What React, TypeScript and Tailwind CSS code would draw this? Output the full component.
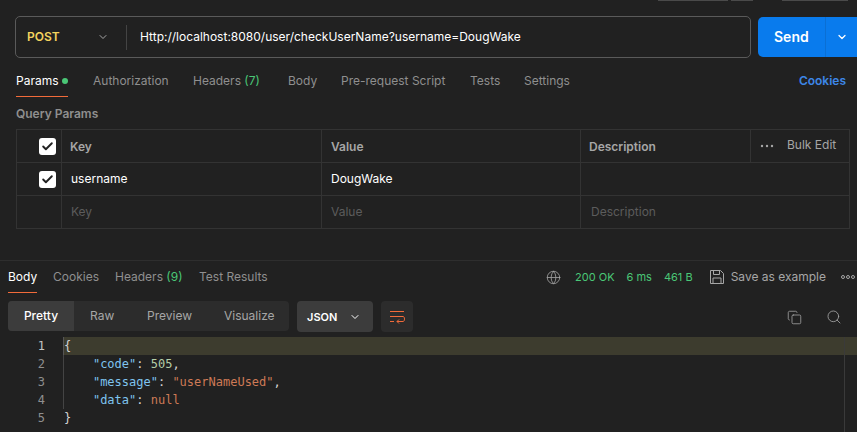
import { Copy, Search, ChevronDown, Globe, Check } from 'lucide-react';

const requestTabs = [
    { label: 'Authorization', width: 'w-[100px]' },
    { label: 'Headers', count: '(7)', width: 'w-[95px]' },
    { label: 'Body', width: 'w-[53px]' },
    { label: 'Pre-request Script', width: 'w-[129px]' },
    { label: 'Tests', width: 'w-[54px]' },
    { label: 'Settings', width: 'w-[70px]' },
];

function Checkbox() {
    return (
        <span className="flex h-[17px] w-[17px] items-center justify-center rounded-[3px] bg-white">
            <Check size={13} strokeWidth={3.5} className="text-[#212121]" />
        </span>
    );
}

function Dots({ hollow }: { hollow?: boolean }) {
    const r = hollow ? 1.5 : 1.2;
    return (
        <svg width="14" height="6" viewBox="0 0 14 6" fill={hollow ? 'none' : '#a6a6a6'} stroke={hollow ? '#a6a6a6' : 'none'}>
            <circle cx="2" cy="3" r={r} />
            <circle cx="7" cy="3" r={r} />
            <circle cx="12" cy="3" r={r} />
        </svg>
    );
}

function SaveIcon() {
    return (
        <svg width="14" height="14" viewBox="0 0 14 14" fill="none" stroke="#a6a6a6" strokeWidth="1" className="ml-[17px]">
            <path d="M.5.5h10l3 3v10H.5zM3.5.5v4h6v-4M3 13.5V8h8v5.5" />
        </svg>
    );
}

function Row({ first, second, third, box, tone, last }: { first: string; second: string; third: string; box?: boolean; tone: string; last?: boolean }) {
    return (
        <div className={`flex items-center border-[#333333] ${tone} ${last ? 'h-[32px]' : 'h-[33px] border-b'}`}>
            <div className="flex h-full w-[45px] items-center justify-end border-r border-[#333333] pr-[5px]">{box && <Checkbox />}</div>
            <div className="flex h-full w-[260px] items-center border-r border-[#333333] pl-[9px]">{first}</div>
            <div className="flex h-full w-[259px] items-center border-r border-[#333333] pl-[9px]">{second}</div>
            <div className="flex h-full flex-1 items-center pl-[10px]">{third}</div>
        </div>
    );
}

export default function App() {
    return (
        <div className="flex h-[432px] w-[857px] flex-col overflow-hidden bg-[#212121] font-['Inter',sans-serif] text-[12px] leading-[18px] text-[#a6a6a6]">
            {/* Cut off toolbar buttons from the window above */}
            <div className="flex h-[16px] items-start pl-[658px]">
                <span className="h-px w-[70px] bg-[#4a4a4a]" />
                <span className="ml-[3px] h-px w-[22px] bg-[#4a4a4a]" />
                <span className="ml-[29px] h-px w-[66px] bg-[#4a4a4a]" />
            </div>

            <div className="flex h-[42px] pl-[15px]">
                <div className="flex h-full w-[736px] items-center rounded-[5px] border border-[#5a5a5a]">
                    <div className="flex h-[25px] w-[111px] items-center justify-between border-r border-[#444444] pr-[17px] pl-[11px]">
                        <span className="font-semibold text-[#f4d35e]">POST</span>
                        <ChevronDown size={12} className="text-[#a6a6a6]" />
                    </div>
                    <span className="pl-[13px] text-white">Http://localhost:8080/user/checkUserName?username=DougWake</span>
                </div>
                <div className="mt-px ml-[7px] flex h-[40px] flex-1 items-center rounded-l-[5px] bg-[#097bed] text-white">
                    <span className="w-[67px] pl-[16px] text-[14px] font-semibold">Send</span>
                    <span className="flex h-full flex-1 items-center justify-center border-l border-[#0a6fd4]">
                        <ChevronDown size={12} strokeWidth={2.5} />
                    </span>
                </div>
            </div>

            <div className="flex h-[47px] items-start pl-[16px] pt-[14px]">
                <div className="w-[77px]">
                    <div className="flex w-[52px] items-center justify-between border-b border-[#f26b3a] pb-[6px] text-white">
                        Params <span className="h-[6px] w-[6px] rounded-full bg-[#4ac776]" />
                    </div>
                </div>
                {requestTabs.map((tab) => (
                    <span key={tab.label} className={`${tab.width} text-[#8f8f8f]`}>
                        {tab.label} {tab.count && <span className="text-[#4ac776]">{tab.count}</span>}
                    </span>
                ))}
                <span className="ml-auto pr-[11px] font-semibold text-[#3d87e8]">Cookies</span>
            </div>

            <div className="h-[24px] pl-[16px] font-semibold text-[#8f8f8f]">Query Params</div>

            <div className="ml-[16px] h-[100px] w-[834px] border border-[#333333]">
                <div className="flex h-[33px] items-center border-b border-[#333333] font-semibold text-[#a6a6a6]">
                    <div className="flex h-full w-[45px] items-center justify-end border-r border-[#333333] pr-[5px]"><Checkbox /></div>
                    <div className="flex h-full w-[260px] items-center border-r border-[#333333] pt-px pl-[8px]">Key</div>
                    <div className="flex h-full w-[259px] items-center border-r border-[#333333] pt-px pl-[9px]">Value</div>
                    <div className="flex h-full w-[170px] items-center border-r border-[#333333] pt-px pl-[8px]">Description</div>
                    <div className="flex h-full flex-1 items-center pl-[9px] font-normal">
                        <Dots />
                        <span className="ml-[13px] pb-[2px]">Bulk Edit</span>
                    </div>
                </div>
                <Row first="username" second="DougWake" third="" box tone="text-white" />
                <Row first="Key" second="Value" third="Description" tone="text-[#5c5c5c]" last />
            </div>

            <div className="mt-[31px] flex h-[33px] items-start border-t border-[#2e2e2e] pl-[8px] pt-[7px]">
                <div className="w-[45px]">
                    <div className="w-[29px] border-b border-[#f26b3a] pb-[6px] text-white">Body</div>
                </div>
                <span className="w-[62px] text-[#8f8f8f]">Cookies</span>
                <span className="w-[84px] text-[#8f8f8f]">Headers <span className="text-[#4ac776]">(9)</span></span>
                <span className="text-[#8f8f8f]">Test Results</span>
                <div className="ml-auto flex items-center pr-[2px]">
                    <Globe size={15} strokeWidth={1.25} className="text-[#a6a6a6]" />
                    <span className="ml-[14px] text-[11px] text-[#4ac776]">200 OK</span>
                    <span className="ml-[12px] text-[11px] text-[#4ac776]">6 ms</span>
                    <span className="ml-[12px] text-[11px] text-[#4ac776]">461 B</span>
                    <SaveIcon />
                    <span className="ml-[7px] text-[#a6a6a6]">Save as example</span>
                    <span className="ml-[15px]"><Dots hollow /></span>
                </div>
            </div>

            <div className="mt-[8px] flex h-[31px] items-start pl-[8px]">
                <div className="flex h-[30px] w-[281px] items-center rounded-[4px] bg-[#2c2c2c] text-[#a6a6a6]">
                    <span className="flex h-full w-[66px] items-center justify-center rounded-l-[4px] bg-[#3c3c3c] font-medium text-white">Pretty</span>
                    <span className="w-[73px] pl-[16px]">Raw</span>
                    <span className="w-[77px]">Preview</span>
                    <span>Visualize</span>
                </div>
                <div className="ml-[8px] flex h-[31px] w-[76px] items-center rounded-[4px] bg-[#3c3c3c] pl-[10px] text-[11px] font-semibold text-white">
                    JSON
                    <ChevronDown size={12} className="ml-[12px]" />
                </div>
                <div className="ml-[8px] flex h-[31px] w-[32px] items-center justify-center rounded-[4px] bg-[#2c2c2c]">
                    <svg width="16" height="14" viewBox="0 0 16 14" fill="none" stroke="#f26b3a" strokeWidth="1">
                        <path d="M1 1.5h14M1 6.5h13c2 0 2 5 0 5H8M10 9.5l-2 2 2 2M1 11.5h4" />
                    </svg>
                </div>
                <div className="ml-auto flex items-center gap-[24px] pt-[8px] pr-[15px]">
                    <Copy size={15} strokeWidth={1.25} className="text-[#a6a6a6]" />
                    <Search size={16} strokeWidth={1.25} className="text-[#a6a6a6]" />
                </div>
            </div>

            <div className="relative mt-[5px] flex font-['DejaVu_Sans_Mono',monospace] text-[12px] leading-[18px]">
                <div className="w-[64px] pr-[19px] text-right text-[#8f8f8f]">
                    <div className="text-[#c4c4c4]">1</div>
                    <div>2</div>
                    <div>3</div>
                    <div>4</div>
                    <div>5</div>
                </div>
                <div className="flex-1 whitespace-pre text-[#d4d4d4]">
                    <div className="-ml-px border-l border-[#555555] bg-[#3d3c2e]">{'{'}</div>
                    <div className="-ml-px border-l border-[#444444]">{'    '}<span className="text-[#7fc4ef]">"code"</span>: <span className="text-[#b5cea8]">505</span>,</div>
                    <div className="-ml-px border-l border-[#444444]">{'    '}<span className="text-[#7fc4ef]">"message"</span>: <span className="text-[#ce7a56]">"userNameUsed"</span>,</div>
                    <div className="-ml-px border-l border-[#444444]">{'    '}<span className="text-[#7fc4ef]">"data"</span>: <span className="text-[#ce7a56]">null</span></div>
                    <div>{'}'}</div>
                </div>
                {/* Overview ruler edge on top of the code */}
                <span className="absolute top-0 right-[12px] h-[95px] w-px bg-[#3a3a3a]" />
            </div>
        </div>
    );
}
